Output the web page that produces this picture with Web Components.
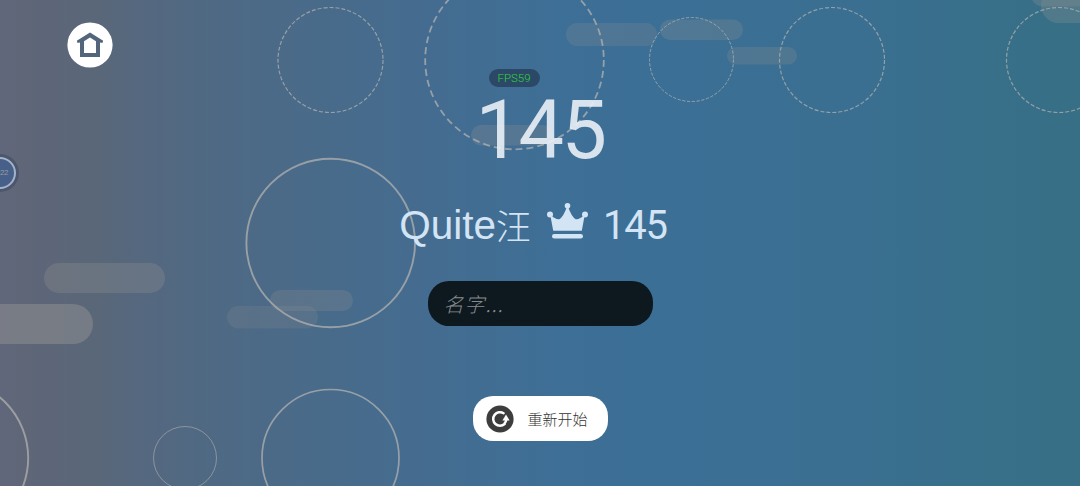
<!DOCTYPE html>
<html lang="zh-CN">
<head>
<meta charset="UTF-8">
<title>145</title>
<style>
  html, body {
    margin: 0;
    height: 100%;
    overflow: hidden;
  }
</style>
</head>
<body>
<game-over>
  <home-button slot="toolbar"></home-button>
  <fps-badge slot="panel">FPS59</fps-badge>
  <final-score slot="panel">145</final-score>
  <best-record slot="panel" score="145">Quite<span lang="zh-CN">汪</span></best-record>
  <name-field slot="panel" placeholder="名字..."></name-field>
  <restart-button slot="panel">重新开始</restart-button>
  <float-ball slot="overlay">22</float-ball>
</game-over>

<script>
// 背景：圆环与半透明胶囊条
const RINGS = [
  { x: 330.5, y: 60, r: 52.5, w: 1.2, dash: '4 2' },
  { x: 514.5, y: 60, r: 89.3, w: 1.8, dash: '7 4' },
  { x: 691.5, y: 59.5, r: 42, w: 1, dash: '3.2 1.6' },
  { x: 832, y: 60, r: 52.5, w: 1.2, dash: '4 2' },
  { x: 1059, y: 60, r: 52.5, w: 1.2, dash: '4 2' },
  { x: 330.7, y: 243, r: 84.3, w: 1.9 },
  { x: 330.5, y: 458, r: 68.5, w: 1.7 },
  { x: 185, y: 458, r: 31.5, w: 0.8 },
  { x: -51, y: 458, r: 79.2, w: 1.9 }
];

const BARS = [
  { x: 44, y: 263, w: 121, h: 30, o: 0.3 },
  { x: -30, y: 304, w: 123, h: 40, o: 0.5 },
  { x: 227, y: 306, w: 91, h: 22.5, o: 0.2 },
  { x: 270, y: 290, w: 83, h: 21, o: 0.24 },
  { x: 566, y: 23, w: 91, h: 23, o: 0.22 },
  { x: 660, y: 19.5, w: 83, h: 20.5, o: 0.26 },
  { x: 727, y: 47, w: 70, h: 17.5, o: 0.24 },
  { x: 471, y: 125, w: 82, h: 20.5, o: 0.26 },
  { x: 1031, y: -17, w: 100, h: 23.5, o: 0.27 },
  { x: 1041, y: -12, w: 130, h: 35, o: 0.27 }
];

class SceneBackdrop extends HTMLElement {
  constructor() {
    super();
    this.attachShadow({ mode: 'open' });
    const bars = BARS.map(b =>
      `<rect x="${b.x}" y="${b.y}" width="${b.w}" height="${b.h}" rx="${b.h / 2}" fill-opacity="${b.o}"/>`
    ).join('');
    const rings = RINGS.map(c =>
      `<circle cx="${c.x}" cy="${c.y}" r="${c.r}" stroke-width="${c.w}" ${c.dash ? `stroke-dasharray="${c.dash}"` : ''}/>`
    ).join('');
    this.shadowRoot.innerHTML = `
      <style>
        :host {
          display: block;
          background: linear-gradient(90deg, #60677a 0, #5e6678 28px, #596779 100px,
            #55687f 140px, #506983 200px, #4b6a87 270px, #486b8b 340px, #446c90 430px,
            #3e6f96 560px, #3b6f95 680px, #3a6f91 860px, #386f8a 970px, #376f86 1080px);
        }
        svg {
          display: block;
        }
      </style>
      <svg width="1080" height="486" viewBox="0 0 1080 486">
        <g fill="#929292">${bars}</g>
        <g fill="none" stroke="#b5b4b1" stroke-opacity="0.72">${rings}</g>
      </svg>
    `;
  }
}

class GameOver extends HTMLElement {
  constructor() {
    super();
    this.attachShadow({ mode: 'open' });
    this.shadowRoot.innerHTML = `
      <style>
        :host {
          display: grid;
          grid-template: 486px / 1080px;
          font-family: "Liberation Sans", "Noto Sans CJK SC", sans-serif;
          overflow: hidden;
        }
        scene-backdrop, .content {
          grid-area: 1 / 1;
        }
        .content {
          position: relative;
          display: grid;
          grid-template-columns: 1fr 360px 1fr;
        }
        .toolbar {
          padding: 22px 0 0 67px;
        }
        .panel {
          display: flex;
          flex-direction: column;
          align-items: center;
          padding-top: 69px;
        }
      </style>
      <scene-backdrop></scene-backdrop>
      <div class="content">
        <div class="toolbar"><slot name="toolbar"></slot></div>
        <div class="panel"><slot name="panel"></slot></div>
        <slot name="overlay"></slot>
      </div>
    `;
  }
}

class HomeButton extends HTMLElement {
  constructor() {
    super();
    this.attachShadow({ mode: 'open' });
    this.shadowRoot.innerHTML = `
      <style>
        :host {
          display: flex;
          width: 46px;
          height: 46px;
          cursor: pointer;
        }
      </style>
      <svg width="46" height="46" viewBox="0 0 46 46">
        <circle cx="23" cy="23" r="22.6" fill="#fff"/>
        <path d="M23 10.5 36.2 18.8 35.4 21 33 20.6V35H13V20.6L10.6 21 9.8 18.8ZM23 15.4 17 19.2V31H29V19.2Z"
          fill="#53657b" fill-rule="evenodd"/>
      </svg>
    `;
  }
}

class FpsBadge extends HTMLElement {
  constructor() {
    super();
    this.attachShadow({ mode: 'open' });
    this.shadowRoot.innerHTML = `
      <style>
        :host {
          display: flex;
          align-items: center;
          justify-content: center;
          width: 51px;
          height: 18px;
          margin-right: 52px;
          border-radius: 9px;
          background: rgba(30, 50, 75, 0.62);
          color: #2fd43c;
          font: 300 11.5px/17px Roboto, sans-serif;
        }
      </style>
      <slot></slot>
    `;
  }
}

class FinalScore extends HTMLElement {
  constructor() {
    super();
    this.attachShadow({ mode: 'open' });
    this.shadowRoot.innerHTML = `
      <style>
        :host {
          display: block;
          height: 88px;
          color: rgba(240, 245, 250, 0.87);
          font-family: Roboto, sans-serif;
          font-size: 81px;
          line-height: 88px;
          letter-spacing: -2.5px;
        }
      </style>
      <slot></slot>
    `;
  }
}

class BestRecord extends HTMLElement {
  constructor() {
    super();
    this.attachShadow({ mode: 'open' });
    this.shadowRoot.innerHTML = `
      <style>
        :host {
          display: flex;
          align-items: center;
          height: 48px;
          margin: 26px 14px 0 0;
          color: #d3e4f4;
          font-size: 40.5px;
          line-height: 48px;
          white-space: nowrap;
        }
        ::slotted(span) {
          font: 300 35px/48px "Noto Sans CJK SC", sans-serif;
        }
        .name {
          display: flex;
        }
        .score {
          padding-top: 1px;
          font-family: Roboto, sans-serif;
          font-size: 40px;
          letter-spacing: -1.2px;
        }
        svg {
          flex: none;
          margin: -8px 15px 0 16px;
        }
      </style>
      <div class="name"><slot></slot></div>
      <svg width="41" height="36" viewBox="0 0 41 36" fill="currentColor">
        <circle cx="20.5" cy="2.8" r="2.8"/>
        <circle cx="3" cy="11.5" r="3"/>
        <circle cx="38" cy="11.5" r="3"/>
        <path d="M3.2 11.5Q8.8 17 12.3 16.2 16.5 13.8 20 3.5H21Q24.5 13.8 28.7 16.2 32.2 17 37.8 11.5L34.8 27.7H6.2Z"/>
        <rect x="5" y="31" width="31" height="4.6" rx="2.3"/>
      </svg>
      <div class="score"></div>
    `;
    this.shadowRoot.querySelector('.score').textContent = this.getAttribute('score');
  }
}

class NameField extends HTMLElement {
  constructor() {
    super();
    this.attachShadow({ mode: 'open' });
    this.shadowRoot.innerHTML = `
      <style>
        :host {
          display: block;
          margin-top: 32px;
        }
        input {
          display: block;
          box-sizing: border-box;
          width: 225px;
          height: 45px;
          padding: 0 16px;
          border: 0;
          border-radius: 21px;
          outline: none;
          background: #0e181f;
          color: #fff;
          font: italic 300 20px "Noto Sans CJK SC", sans-serif;
          letter-spacing: 1px;
        }
        input::placeholder {
          color: #878b8e;
        }
      </style>
      <input type="text">
    `;
    this.shadowRoot.querySelector('input').placeholder = this.getAttribute('placeholder');
  }
}

class RestartButton extends HTMLElement {
  constructor() {
    super();
    this.attachShadow({ mode: 'open' });
    this.shadowRoot.innerHTML = `
      <style>
        :host {
          display: flex;
          align-items: center;
          gap: 14px;
          box-sizing: border-box;
          width: 135px;
          height: 45px;
          margin-top: 70px;
          padding-left: 13px;
          border-radius: 20px;
          background: #fff;
          color: #333;
          font: 300 15px/45px "Noto Sans CJK SC", sans-serif;
          white-space: nowrap;
          cursor: pointer;
        }
        svg {
          flex: none;
        }
      </style>
      <svg width="28" height="28" viewBox="0 0 28 28">
        <circle cx="14" cy="14" r="13.6" fill="#3d3d3d"/>
        <path d="M17.6 8.2A6.8 6.8 0 1 0 18.6 19" fill="none" stroke="#fff" stroke-width="2.5" stroke-linecap="round"/>
        <path d="M18.3 18.6Q20.2 17 20.2 14.8" fill="none" stroke="#fff" stroke-width="2.5"/>
        <path d="M20 9.6 23.6 15.4 16.4 15.6Z" fill="#fff"/>
      </svg>
      <slot></slot>
    `;
  }
}

// 贴在屏幕左缘的悬浮球
class FloatBall extends HTMLElement {
  constructor() {
    super();
    this.attachShadow({ mode: 'open' });
    this.shadowRoot.innerHTML = `
      <style>
        :host {
          position: absolute;
          left: -16px;
          top: 157px;
          box-sizing: border-box;
          width: 32px;
          height: 32px;
          padding-left: 14px;
          border: 2.5px solid #a3b3c9;
          border-radius: 50%;
          background: #47608a;
          box-shadow: 0 0 0 3px rgba(60, 72, 98, 0.55);
          color: #9699a2;
          font-size: 8px;
          line-height: 27px;
          letter-spacing: -0.5px;
        }
      </style>
      <slot></slot>
    `;
  }
}

customElements.define('scene-backdrop', SceneBackdrop);
customElements.define('home-button', HomeButton);
customElements.define('fps-badge', FpsBadge);
customElements.define('final-score', FinalScore);
customElements.define('best-record', BestRecord);
customElements.define('name-field', NameField);
customElements.define('restart-button', RestartButton);
customElements.define('float-ball', FloatBall);
customElements.define('game-over', GameOver);
</script>
</body>
</html>
